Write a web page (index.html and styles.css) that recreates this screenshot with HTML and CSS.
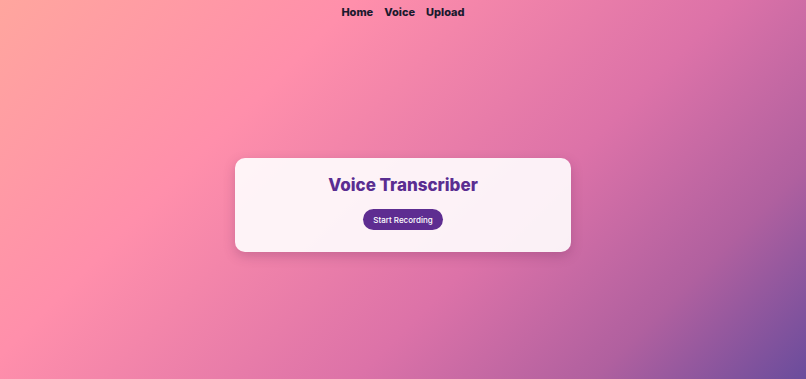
FILE: index.html
```html
<!DOCTYPE html>
<html lang="en">
<head>
  <meta charset="UTF-8">
  <title>Voice Transcriber</title>
  <meta name="viewport" content="width=device-width, initial-scale=1.0">
  <link rel="stylesheet" href="styles.css">
</head>
<body>

<nav class="nav">
  <a href="#">Home</a>
  <a href="#">Voice</a>
  <a href="#">Upload</a>
</nav>

<main class="main">
  <div class="card">
    <h1 class="card-title">Voice Transcriber</h1>
    <button class="record-btn">Start Recording</button>
  </div>
</main>

</body>
</html>
```

FILE: styles.css
```css
html, body {
  height: 100%;
}

body {
  margin: 0;
  padding: 0;
  font-family: "Inter", "Noto Sans", sans-serif;
  background: linear-gradient(135deg, #ffa69e 0%, #ff8fab 30%, #dc72a8 62%, #b0609f 82%, #6a4c9c 100%);
  display: flex;
  flex-direction: column;
}

.nav {
  display: flex;
  justify-content: center;
  gap: 11px;
  padding-top: 5px;
  height: 26px;
}

.nav a {
  color: #1a1a2e;
  text-decoration: none;
  font-weight: 800;
  font-size: 11px;
  line-height: 14px;
}

.main {
  flex: 1;
  display: flex;
  align-items: center;
  justify-content: center;
}

.card {
  width: 336px;
  box-sizing: border-box;
  padding: 15px 20px 22px;
  border-radius: 10px;
  background: rgba(255, 255, 255, 0.9);
  box-shadow: 0 4px 12px rgba(90, 30, 80, 0.25);
  text-align: center;
}

.card-title {
  margin: 0 0 10px;
  font-size: 17px;
  line-height: 24px;
  font-weight: 800;
  color: #5a2d91;
}

.record-btn {
  border: none;
  cursor: pointer;
  background: #5e2d91;
  color: #fff;
  font-family: inherit;
  font-size: 8px;
  font-weight: 500;
  height: 21px;
  padding: 0 10px;
  border-radius: 11px;
}

.record-btn:hover {
  background: #4b2275;
}
```
